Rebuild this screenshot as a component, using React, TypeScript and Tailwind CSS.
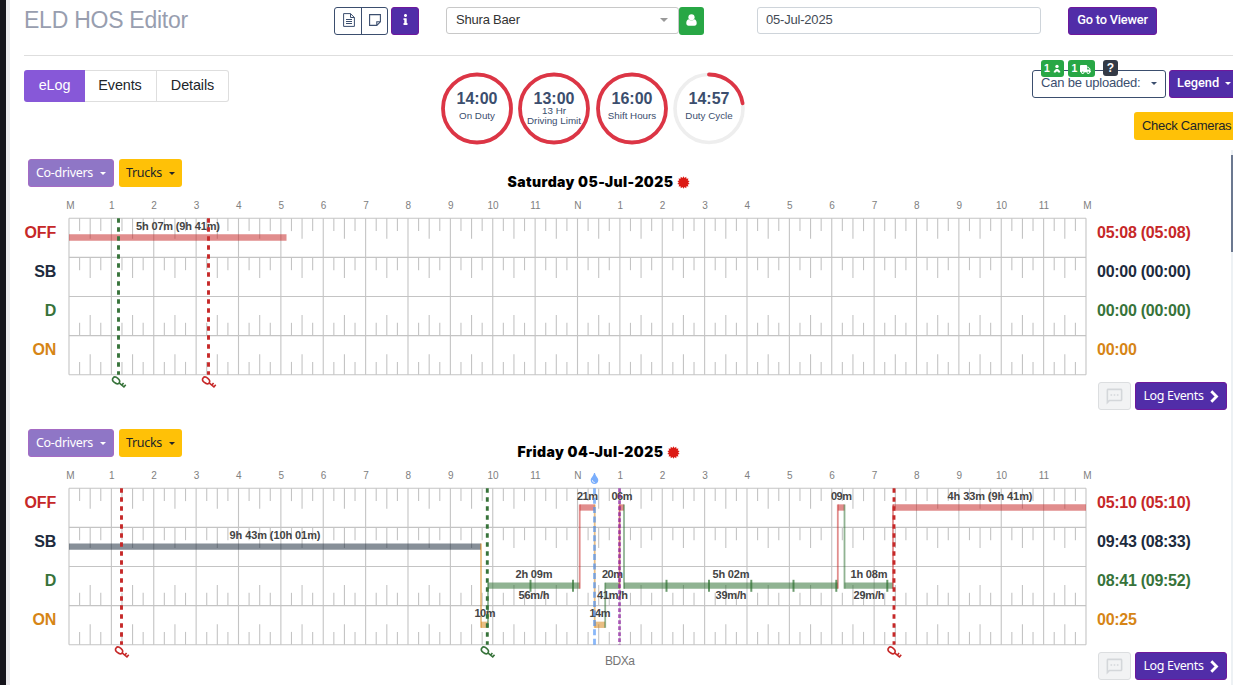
import { FaInfo, FaTint, FaTruck } from "react-icons/fa";
import { MdOutlineSms } from "react-icons/md";

type Status = "OFF" | "SB" | "D" | "ON";

type Segment = { status: Status; from: number; to: number };
type Label = { text: string; x: number; y: number; w: number };
type Marker = { x: number; kind: "on" | "off" | "fuel" | "note" };

type Day = {
    title: string;
    totals: string[];
    segments: Segment[];
    labels: Label[];
    markers: Marker[];
    ticks: number[];
    note?: { text: string; x: number };
};

const hours = ["M", "1", "2", "3", "4", "5", "6", "7", "8", "9", "10", "11", "N", "1", "2", "3", "4", "5", "6", "7", "8", "9", "10", "11", "M"];

const rows: Status[] = ["OFF", "SB", "D", "ON"];

const rowColors = ["text-[#c62828]", "text-[#1d2b3d]", "text-[#37733a]", "text-[#d68516]"];

const colors: Record<Status, string> = {
    OFF: "#c62828",
    SB: "#1d2b3d",
    D: "#2e7031",
    ON: "#d68516",
};

// chart geometry, in pixels
const LEFT = 9;
const TOP = 22.3;
const HOUR = 42.375;
const ROW = 39.1;

const days: Day[] = [
    {
        title: "Saturday 05-Jul-2025",
        totals: ["05:08 (05:08)", "00:00 (00:00)", "00:00 (00:00)", "00:00"],
        segments: [{ status: "OFF", from: 9, to: 226.5 }],
        labels: [{ text: "5h 07m (9h 41m)", x: 118, y: 34, w: 84 }],
        markers: [
            { x: 58.5, kind: "on" },
            { x: 148.5, kind: "off" },
        ],
        ticks: [],
    },
    {
        title: "Friday 04-Jul-2025",
        totals: ["05:10 (05:10)", "09:43 (08:33)", "08:41 (09:52)", "00:25"],
        segments: [
            { status: "SB", from: 9, to: 421 },
            { status: "ON", from: 421, to: 428 },
            { status: "D", from: 428, to: 519.7 },
            { status: "OFF", from: 519.7, to: 534.7 },
            { status: "ON", from: 534.7, to: 545.2 },
            { status: "D", from: 545.2, to: 559.5 },
            { status: "OFF", from: 559.5, to: 564 },
            { status: "D", from: 564, to: 777.8 },
            { status: "OFF", from: 777.8, to: 784.5 },
            { status: "D", from: 784.5, to: 833 },
            { status: "OFF", from: 833, to: 1026 },
        ],
        labels: [
            { text: "9h 43m (10h 01m)", x: 215, y: 73, w: 91 },
            { text: "10m", x: 425, y: 151, w: 21 },
            { text: "2h 09m", x: 474, y: 112, w: 37 },
            { text: "56m/h", x: 474, y: 133, w: 31 },
            { text: "21m", x: 527.5, y: 34, w: 21 },
            { text: "14m", x: 540, y: 151, w: 21 },
            { text: "20m", x: 552.5, y: 112, w: 21 },
            { text: "41m/h", x: 552.5, y: 133, w: 31 },
            { text: "06m", x: 562, y: 34, w: 21 },
            { text: "5h 02m", x: 671, y: 112, w: 37 },
            { text: "39m/h", x: 671, y: 133, w: 31 },
            { text: "09m", x: 781.5, y: 34, w: 21 },
            { text: "1h 08m", x: 809, y: 112, w: 37 },
            { text: "29m/h", x: 809, y: 133, w: 31 },
            { text: "4h 33m (9h 41m)", x: 930, y: 34, w: 85 },
        ],
        markers: [
            { x: 61.5, kind: "off" },
            { x: 427.3, kind: "on" },
            { x: 534.5, kind: "fuel" },
            { x: 559.5, kind: "note" },
            { x: 834, kind: "off" },
        ],
        ticks: [470.5, 513, 606.5, 649, 691.3, 733.5, 776.3, 827.3],
        note: { text: "BDXa", x: 560 },
    },
];

function Caret({ className = "" }: { className?: string }) {
    return <span className={`inline-block border-x-[3px] border-t-[3px] border-x-transparent border-t-current ${className}`} />;
}

function FileIcon() {
    return (
        <svg width="12" height="14" viewBox="0 0 12 14" fill="none" stroke="currentColor">
            <path d="M.6.600h6.900l3.900 3.900v8.900H.6zM7.500.600v3.900h3.900M3 6.500h6M3 8.500h6M3 10.500h6" />
        </svg>
    );
}

function StickyIcon() {
    return (
        <svg width="12" height="12" viewBox="0 0 12 12" fill="none" stroke="currentColor" strokeWidth="1.100">
            <path d="M.6.600h10.800v7.200l-3.600 3.600H.6zM11.400 7.800H7.800v3.600" />
        </svg>
    );
}

function UserIcon() {
    return (
        <svg width="11" height="12" viewBox="0 0 11 12" fill="currentColor">
            <circle cx="5.500" cy="3.300" r="3.100" />
            <path d="M2.600 5.300C1 5.700.3 7.300.3 9.300c0 1.500.9 2.500 2.200 2.500h6c1.300 0 2.200-1 2.200-2.500 0-2-.7-3.600-2.300-4-1.700 1.600-4.100 1.600-5.800 0z" />
        </svg>
    );
}

function ChevronIcon() {
    return (
        <svg width="9" height="13" viewBox="0 0 9 13" fill="none" stroke="currentColor" strokeWidth="2.800">
            <path d="M1.300 1.300L6.500 6.500l-5.200 5.200" />
        </svg>
    );
}

function Starburst() {
    const points = Array.from({ length: 28 }, (_, i) => {
        const r = i % 2 ? 4.7 : 6.3;
        const a = (Math.PI * i) / 14;
        return `${6.5 + r * Math.sin(a)},${6.5 - r * Math.cos(a)}`;
    }).join(" ");
    return (
        <svg width="13" height="13" viewBox="0 0 13 13">
            <polygon points={points} fill="#dc1a14" />
        </svg>
    );
}

function KeyIcon({ x, color }: { x: number; color: string }) {
    return (
        <g transform={`translate(${x - 2.4} 184.4) rotate(40)`} fill="none" stroke={color} strokeWidth="1.6">
            <ellipse cx="0" cy="0" rx="3.9" ry="2.7" />
            <path d="M3.9 0H11M7.4 0v-2.800M10.2 0v-2.800" />
        </g>
    );
}

function Gauge({ value, label, percent }: { value: string; label: string[]; percent: number }) {
    const length = 2 * Math.PI * 34;
    return (
        <svg width="72" height="74" viewBox="0 0 72 74" className="font-['Liberation_Sans',sans-serif]">
            <circle cx="36" cy="36.5" r="34" fill="none" stroke="#eeeeee" strokeWidth="3.6" />
            <circle
                cx="36"
                cy="36.5"
                r="34"
                fill="none"
                stroke="#dc3545"
                strokeWidth="3.8"
                strokeLinecap="round"
                strokeDasharray={`${length * percent} ${length}`}
                transform="rotate(-90 36 36.5)"
            />
            <text x="36" y="32" textAnchor="middle" fontSize="16" fontWeight="700" fill="#3b4e6e" textLength="41">
                {value}
            </text>
            {label.map((line, i) => (
                <text key={line} x="36" y={(label.length > 1 ? 42 : 47) + i * 10} textAnchor="middle" fontSize="9.8" fill="#3b4e6e">
                    {line}
                </text>
            ))}
        </svg>
    );
}

function DutyChart({ day }: { day: Day }) {
    const barY = (s: Status) => TOP + rows.indexOf(s) * ROW + 19.2;
    const right = LEFT + HOUR * 24;
    const bottom = TOP + ROW * 4;

    return (
        <svg width="1036" height="210" viewBox="0 0 1036 210" className="shrink-0 overflow-visible font-['Liberation_Sans',sans-serif] font-normal">
            {hours.map((h, i) => (
                <text key={i} x={LEFT + i * HOUR + (h === "M" ? 1.5 : 0.3)} y="13" textAnchor="middle" fontSize="10" fill="#808080">
                    {h}
                </text>
            ))}

            {/* grid */}
            <g stroke="#c4c4c4" strokeWidth="1.1">
                {[0, 1, 2, 3, 4].map((r) => (
                    <line key={r} x1={LEFT} x2={right} y1={TOP + r * ROW} y2={TOP + r * ROW} />
                ))}
                {hours.map((_, i) => (
                    <line key={i} x1={LEFT + i * HOUR} x2={LEFT + i * HOUR} y1={TOP} y2={bottom} />
                ))}
                {rows.map((_, r) =>
                    Array.from({ length: 96 }, (_, q) => {
                        if (q % 4 === 0) return null;
                        const size = q % 2 === 0 ? 20.5 : 12.8;
                        const x = LEFT + (q * HOUR) / 4;
                        const y = r < 2 ? TOP + r * ROW : TOP + (r + 1) * ROW - size;
                        return <line key={`${r}-${q}`} x1={x} x2={x} y1={y} y2={y + size} />;
                    })
                )}
            </g>

            {/* duty status */}
            <g strokeOpacity="0.53">
                {day.segments.map((s, i) => {
                    const prev = day.segments[i - 1];
                    return (
                        <g key={i} stroke={colors[s.status]}>
                            <line x1={s.from} x2={s.to} y1={barY(s.status)} y2={barY(s.status)} strokeWidth="6.3" />
                            {prev && (
                                <line
                                    x1={s.from}
                                    x2={s.from}
                                    y1={Math.min(barY(prev.status), barY(s.status)) - 3}
                                    y2={Math.max(barY(prev.status), barY(s.status)) + 3}
                                    strokeWidth="1.8"
                                />
                            )}
                        </g>
                    );
                })}
            </g>
            {day.ticks.map((x) => (
                <line key={x} x1={x} x2={x} y1="113.8" y2="125.8" stroke="#2e7031" strokeOpacity="0.7" strokeWidth="2" />
            ))}

            {day.labels.map((l) => (
                <text key={l.text + l.x} x={l.x} y={l.y} textAnchor="middle" fontSize="11" fontWeight="700" fill="#444444" textLength={l.w}>
                    {l.text}
                </text>
            ))}

            {/* vertical markers */}
            {day.markers.map((m) => {
                if (m.kind === "fuel") {
                    return (
                        <g key={m.x}>
                            <line x1={m.x} x2={m.x} y1={TOP} y2={bottom} stroke="#4a90f5" strokeOpacity="0.65" strokeWidth="2.8" strokeDasharray="6 3.4" />
                            <FaTint x={m.x - 5.5} y="7" size={11} color="#7aaefc" />
                        </g>
                    );
                }
                if (m.kind === "note") {
                    return <line key={m.x} x1={m.x} x2={m.x} y1={TOP} y2={bottom} stroke="#8e1aa0" strokeOpacity="0.68" strokeWidth="2.8" strokeDasharray="3.6 2.4" />;
                }
                const color = m.kind === "on" ? "#37733a" : "#c62828";
                return (
                    <g key={m.x}>
                        <line x1={m.x} x2={m.x} y1={TOP} y2={bottom} stroke={color} strokeWidth="2.9" strokeDasharray="4.5 4.5" />
                        <KeyIcon x={m.x} color={color} />
                    </g>
                );
            })}

            {day.note && (
                <text x={day.note.x} y="199" textAnchor="middle" fontSize="12" fill="#757575" textLength="30">
                    {day.note.text}
                </text>
            )}
        </svg>
    );
}

function DayLog({ day }: { day: Day }) {
    return (
        <section className="h-[270px] pt-[9px]">
            {/* heading */}
            <div className="ml-[18px] grid h-[37px] w-[1142px] grid-cols-[1fr_auto_1fr] items-start">
                <div className="flex gap-[5px] font-['Noto_Sans',sans-serif] text-[12.5px] tracking-[-0.3px]">
                    <button className="flex h-7 w-[86px] items-center justify-center gap-[7px] rounded-[3px] border border-[#a56bc4] bg-[#8f76c6] pt-px text-white">
                        Co-drivers <Caret />
                    </button>
                    <button className="flex h-7 w-[63px] items-center justify-center gap-[7px] rounded-[3px] bg-[#ffc107] pt-px text-[#212529]">
                        Trucks <Caret />
                    </button>
                </div>
                <h2 className="mt-[13px] flex items-center gap-1 font-['Inter',sans-serif] text-[14px] leading-5 font-black tracking-[0.42px] text-black">
                    {day.title} <Starburst />
                </h2>
            </div>

            {/* chart */}
            <div className="flex h-[186px] font-['Liberation_Sans',sans-serif] text-[16px] font-bold">
                <div className="flex w-[50px] shrink-0 flex-col pt-[17px] pr-[4px] text-right leading-[39px] tracking-[-0.2px]">
                    {rows.map((r, i) => (
                        <span key={r} className={rowColors[i]}>
                            {r}
                        </span>
                    ))}
                </div>
                <DutyChart day={day} />
                <div className="flex flex-col pt-[17px] pl-px leading-[39px] tracking-[-0.27px] whitespace-nowrap">
                    {day.totals.map((t, i) => (
                        <span key={i} className={rowColors[i]}>
                            {t}
                        </span>
                    ))}
                </div>
            </div>

            {/* actions */}
            <div className="flex justify-end gap-1 pr-[6px] font-['Noto_Sans',sans-serif]">
                <button className="relative flex h-7 w-[33px] items-center justify-center rounded-[3px] border border-[#dcdee0] bg-[#f2f3f4] text-[#d4d7da]">
                    <MdOutlineSms size={19} />
                </button>
                <button className="relative flex h-7 w-[92px] items-center justify-center gap-[6px] rounded-[3px] border border-[#6f189b] bg-[#512da8] text-[12.5px] tracking-[-0.35px] whitespace-nowrap text-white">
                    Log Events <ChevronIcon />
                </button>
            </div>
        </section>
    );
}

export default function App() {
    return (
        <div className="flex h-[685px] w-[1233px] overflow-hidden bg-white font-['Liberation_Sans',sans-serif]">
            <div className="w-[10px] shrink-0 border-r-4 border-[#ebe9ed] bg-[#15131b]" />

            <main className="w-[1223px] shrink-0">
                {/* top bar */}
                <header className="ml-[14px] flex h-[56px] items-start border-b border-[#dedede] pt-[7px] text-[13px] tracking-[-0.2px]">
                    <h1 className="-mt-[2px] w-[310px] text-[23px] leading-[30px] tracking-[-0.25px] whitespace-nowrap text-[#989eaf]">ELD HOS Editor</h1>
                    <div className="flex h-7 w-[54px] divide-x divide-[#3b4e6e] rounded-[3px] border border-[#3b4e6e] text-[#3b4e6e]">
                        <button className="flex flex-1 items-center justify-center pb-[3px] pl-px">
                            <FileIcon />
                        </button>
                        <button className="flex flex-1 items-center justify-center pb-[3px]">
                            <StickyIcon />
                        </button>
                    </div>
                    <button className="ml-[3px] flex h-7 w-7 items-center justify-center rounded-[3px] border border-[#6f189b] bg-[#512da8] pb-[3px] text-white">
                        <FaInfo size={11} />
                    </button>
                    <div className="ml-[27px] flex h-[27px] w-[233px] items-center justify-between rounded-[3px] border border-[#c8c8c8] pr-[10px] pb-[2px] pl-[9px] text-[#333333]">
                        Shura Baer <span className="border-x-4 border-t-4 border-x-transparent border-t-[#999999]" />
                    </div>
                    <button className="flex h-7 w-[25px] items-center justify-center rounded-[3px] bg-[#28a745] pb-[3px] text-white">
                        <UserIcon />
                    </button>
                    <div className="ml-[53px] flex h-[27px] w-[284px] items-center rounded-[3px] border border-[#ced4da] pb-[2px] pl-2 text-[#444b55]">05-Jul-2025</div>
                    <button className="ml-[27px] flex h-7 w-[89px] items-center justify-center rounded-[3px] border border-[#6f189b] bg-[#512da8] pb-[2px] font-['Roboto',sans-serif] text-[12.8px] font-medium text-white">
                        Go to Viewer
                    </button>
                </header>

                {/* tabs, gauges and actions */}
                <div className="ml-[14px] flex h-[94px] items-start pt-[14px]">
                    <nav className="flex h-8 w-[205px] text-[14.4px] tracking-[-0.1px] text-[#212529]">
                        <button className="w-[61px] rounded-l-[3px] bg-[#8758d8] pb-px text-white">eLog</button>
                        <button className="w-[72px] border-y border-r border-[#dedede] pb-px pr-px">Events</button>
                        <button className="flex-1 rounded-r-[3px] border-y border-r border-[#dedede] pb-px">Details</button>
                    </nav>
                    <div className="mt-[2px] ml-[212px] flex gap-[5.4px]">
                        <Gauge value="14:00" label={["On Duty"]} percent={1} />
                        <Gauge value="13:00" label={["13 Hr", "Driving Limit"]} percent={1} />
                        <Gauge value="16:00" label={["Shift Hours"]} percent={1} />
                        <Gauge value="14:57" label={["Duty Cycle"]} percent={0.225} />
                    </div>
                    <div className="ml-auto flex w-[201px] shrink-0 flex-col items-end gap-[14px] text-[13px] whitespace-nowrap">
                        <div className="flex w-full gap-[3px]">
                            <div className="relative h-7 w-[134px] shrink-0 rounded-[3px] border border-[#3b4e6e] text-[#3b4e6e]">
                                <div className="flex items-center justify-between pr-2 pl-2 leading-[24px] tracking-[-0.2px]">
                                    Can be uploaded: <Caret />
                                </div>
                                <div className="absolute -top-[11px] left-[8px] flex gap-1 text-[10.5px] leading-[17px] font-bold text-white">
                                    <span className="flex h-[17px] w-[23px] items-center justify-center gap-[3px] rounded-[3px] bg-[#28a745]">
                                        1
                                        <svg width="8" height="9" viewBox="0 0 8 9" fill="currentColor">
                                            <circle cx="4" cy="2.400" r="1.700" />
                                            <path d="M.8 8.600V7.200L3 5h2l2.200 2.200v1.400H5.400L4 7.200 2.600 8.600z" />
                                        </svg>
                                    </span>
                                    <span className="flex h-[17px] w-[27px] items-center justify-center gap-[3px] rounded-[3px] bg-[#28a745]">
                                        1 <FaTruck size={11} className="mt-px" />
                                    </span>
                                    <span className="ml-1 h-4 w-[15px] rounded-[3px] bg-[#343a46] text-center text-[12px] leading-4">?</span>
                                </div>
                            </div>
                            <button className="flex h-7 w-[74px] shrink-0 items-center gap-[6px] rounded-l-[3px] border border-[#6f189b] bg-[#512da8] pb-[2px] pl-[7px] font-['Roboto',sans-serif] text-[12.8px] font-medium text-white">
                                Legend <Caret />
                            </button>
                        </div>
                        <button className="flex h-7 w-[99px] items-center rounded-l-[3px] bg-[#ffc107] pl-2 tracking-[-0.3px] text-[#212529]">Check Cameras</button>
                    </div>
                </div>

                {/* logs */}
                <div className="flex">
                    <div className="w-[1223px]">
                        {days.map((day) => (
                            <DayLog key={day.title} day={day} />
                        ))}
                    </div>
                    <div className="relative -ml-[2px] h-[535px] w-[2px] shrink-0 bg-[#edf1f4] pt-[5px]">
                        <div className="h-[97px] bg-[#6b7890]" />
                    </div>
                </div>
            </main>
        </div>
    );
}
